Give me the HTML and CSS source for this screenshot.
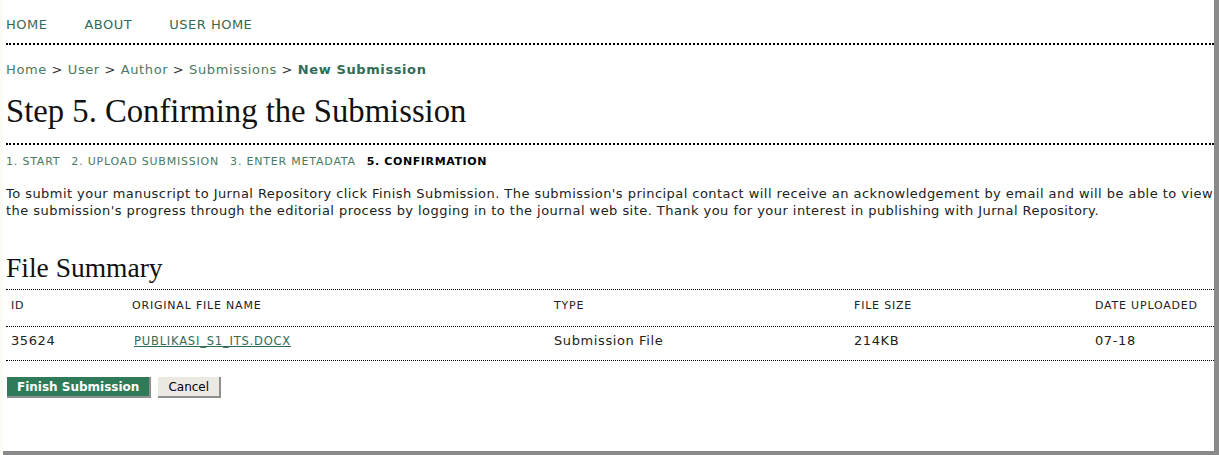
FILE: index.html
```html
<!DOCTYPE html>
<html>
<head>
<meta charset="utf-8">
<link rel="stylesheet" href="styles.css">
</head>
<body>
<div class="page">
  <ul class="nav">
    <li><a href="#">HOME</a></li>
    <li><a href="#">ABOUT</a></li>
    <li><a href="#">USER HOME</a></li>
  </ul>
  <div class="crumbs">
    <a href="#">Home</a> &gt; <a href="#">User</a> &gt; <a href="#">Author</a> &gt; <a href="#">Submissions</a> &gt; <a href="#" class="current">New Submission</a>
  </div>
  <h2 class="title">Step 5. Confirming the Submission</h2>
  <ul class="steps">
    <li><a href="#">1. START</a></li>
    <li><a href="#">2. UPLOAD SUBMISSION</a></li>
    <li><a href="#">3. ENTER METADATA</a></li>
    <li class="active">5. CONFIRMATION</li>
  </ul>
  <p class="intro">To submit your manuscript to Jurnal Repository click Finish Submission. The submission's principal contact will receive an acknowledgement by email and will be able to view the submission's progress through the editorial process by logging in to the journal web site. Thank you for your interest in publishing with Jurnal Repository.</p>
  <h3 class="subtitle">File Summary</h3>
  <div class="files">
    <div class="row head">
      <div>ID</div>
      <div>ORIGINAL FILE NAME</div>
      <div>TYPE</div>
      <div>FILE SIZE</div>
      <div>DATE UPLOADED</div>
    </div>
    <div class="row data">
      <div>35624</div>
      <div><a href="#" class="file">PUBLIKASI_S1_ITS.DOCX</a></div>
      <div>Submission File</div>
      <div>214KB</div>
      <div>07-18</div>
    </div>
  </div>
  <div class="actions">
    <button class="btn primary">Finish Submission</button>
    <button class="btn">Cancel</button>
  </div>
</div>
</body>
</html>
```
FILE: styles.css
```css
html {
  overflow: hidden;
}
body {
  margin: 0;
  padding: 0;
  background: #fbfbf3;
  font-family: "DejaVu Sans", Verdana, sans-serif;
  font-size: 12px;
  color: #222;
}
a {
  color: #336b55;
  text-decoration: none;
}
.page {
  margin-left: 3px;
  width: 1208px;
  height: 451px;
  padding-left: 3px;
  background: #fff;
  border-right: 5px solid #8a8a8a;
  border-bottom: 4px solid #8a8a8a;
}
.nav {
  list-style: none;
  margin: 0;
  padding: 17px 0 10px;
  display: flex;
  border-bottom: 2px dotted #000;
  font-size: 13px;
  line-height: 16px;
  letter-spacing: 0.5px;
}
.nav li {
  margin-right: 37px;
}
.crumbs {
  margin-top: 17px;
  font-size: 13px;
  line-height: 16px;
  letter-spacing: 0.6px;
  color: #333;
}
.crumbs a {
  color: #4a7a62;
}
.crumbs .current {
  font-weight: bold;
  color: #336b55;
}
.title {
  margin: 13px 0 0;
  font-family: "Liberation Serif", serif;
  font-weight: normal;
  font-size: 32.7px;
  line-height: 40px;
  color: #111;
  padding-bottom: 12px;
  border-bottom: 2px dotted #000;
}
.steps {
  list-style: none;
  margin: 0;
  padding: 10px 0 0;
  display: flex;
  gap: 11px;
  font-size: 11px;
  line-height: 14px;
  letter-spacing: 0.8px;
}
.steps a {
  color: #4a7a62;
}
.steps .active {
  font-weight: bold;
  color: #000;
  letter-spacing: 0.6px;
}
.intro {
  margin: 16px -6px 0 0;
  font-size: 13px;
  line-height: 17px;
  letter-spacing: 0.45px;
  color: #222;
}
.subtitle {
  margin: 33px 0 0;
  padding-bottom: 5px;
  font-family: "Liberation Serif", serif;
  font-weight: normal;
  font-size: 27.5px;
  line-height: 32px;
  color: #111;
}
.files {
  border-top: 1px dotted #000;
}
.row {
  display: grid;
  grid-template-columns: 121px 422px 300px 241px 1fr;
  border-bottom: 1px dotted #000;
}
.row > div {
  padding-left: 5px;
  white-space: nowrap;
}
.row.head {
  font-size: 11px;
  line-height: 14px;
  letter-spacing: 0.8px;
}
.row.head > div {
  padding-top: 9px;
  padding-bottom: 13px;
}
.row.data {
  font-size: 13px;
  line-height: 16px;
  letter-spacing: 0.6px;
}
.row.data > div {
  padding-top: 6px;
  padding-bottom: 11px;
}
.row .file {
  margin-left: 2px;
  font-size: 11.5px;
  letter-spacing: 0.8px;
  text-decoration: underline;
}
.actions {
  margin-top: 16px;
  display: flex;
  gap: 7px;
  padding-left: 1px;
}
.btn {
  font-family: "DejaVu Sans", Verdana, sans-serif;
  font-size: 12px;
  height: 21px;
  padding: 0 10px;
  background: #ece9e2;
  color: #000;
  border: none;
  border-right: 2px solid #8f8f8f;
  border-bottom: 2px solid #8f8f8f;
}
.btn.primary {
  background: #2f7a59;
  color: #fff;
  font-weight: bold;
}
```
